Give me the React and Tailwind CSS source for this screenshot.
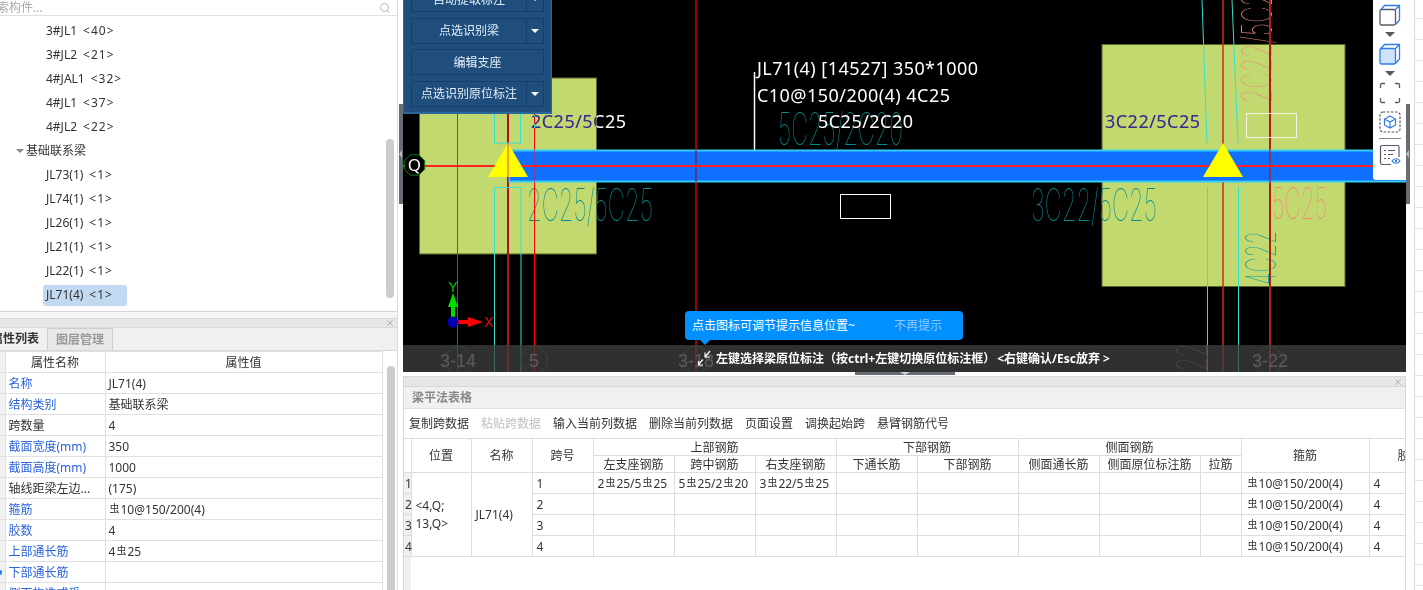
import React from 'react';
import { Search, X } from 'lucide-react';

const treeItems = [
  ['3#JL1', '<40>'],
  ['3#JL2', '<21>'],
  ['4#JAL1', '<32>'],
  ['4#JL1', '<37>'],
  ['4#JL2', '<22>'],
  ['group', '基础联系梁'],
  ['JL73(1)', '<1>'],
  ['JL74(1)', '<1>'],
  ['JL26(1)', '<1>'],
  ['JL21(1)', '<1>'],
  ['JL22(1)', '<1>'],
  ['JL71(4)', '<1>'],
];

// rebar grade mark, sits a little above the digits
const Bar = () => <span className="mx-px text-[10px] align-[2px]">虫</span>;

const propRows = [
  { name: '名称', value: 'JL71(4)', blue: true },
  { name: '结构类别', value: '基础联系梁', blue: true },
  { name: '跨数量', value: '4' },
  { name: '截面宽度(mm)', value: '350', blue: true },
  { name: '截面高度(mm)', value: '1000', blue: true },
  { name: '轴线距梁左边...', value: '(175)' },
  { name: '箍筋', value: <><Bar />10@150/200(4)</>, blue: true },
  { name: '胶数', value: '4', blue: true },
  { name: '上部通长筋', value: <>4<Bar />25</>, blue: true },
  { name: '下部通长筋', value: '', blue: true, dot: true },
  { name: '侧面构造或受', value: '', blue: true },
];

const LeftPanel = () => (
  <div className="flex h-full w-[398px] shrink-0 flex-col overflow-hidden border-r border-[#dcdcdc]">
    <div className="relative h-[312px] shrink-0 border-b border-[#d4d4d4] bg-white">
      <div className="flex h-[16px] items-center justify-between border-b border-[#e0e0e0] pr-[6px]">
        <span className="-ml-[15px] text-xs text-[#aaaaaa]">搜索构件...</span>
        <Search size={12} className="text-[#b8b8b8]" />
      </div>
      <div className="pt-[3px]">
        {treeItems.map(([label, count]) =>
          label === 'group' ? (
            <div key={count} className="flex h-[24px] items-center pl-[16px] text-xs text-[#333]">
              <span className="mr-[2px] h-0 w-0 border-x-[4px] border-t-[4px] border-x-transparent border-t-[#888]"></span>
              {count}
            </div>
          ) : (
            <div key={label} className="flex h-[24px] items-center pl-[43px] text-xs text-[#333]">
              <span className={`flex h-[21px] items-center rounded-[3px] px-[3px] ${label === 'JL71(4)' ? 'w-[84px] bg-[#c1d9f1]' : ''}`}>
                {label}
                <span className="ml-[6px] tracking-[1px]">{count}</span>
              </span>
            </div>
          )
        )}
      </div>
      <div className="absolute right-[3px] top-[139px] h-[159px] w-[8px] rounded bg-[#cccccc]"></div>
    </div>
    <div className="h-[6px] shrink-0 bg-[#f5f5f5]"></div>
    <div className="flex h-[10px] shrink-0 items-center justify-end border-y border-[#d8d8d8] bg-[#e6e6e6] pr-[2px]">
      <X size={10} className="text-[#aaa]" />
    </div>
    <div className="flex h-[23px] shrink-0 border-b border-[#d8d8d8] bg-[#f0f0f0] text-xs font-bold">
      <div className="flex w-[47px] items-center overflow-hidden">
        <span className="-ml-[9px] shrink-0 text-[#333]">属性列表</span>
      </div>
      <div className="flex w-[66px] items-center justify-center border-x border-t border-[#cccccc] bg-[#e8e8e8] text-[#999]">图层管理</div>
    </div>
    <div className="relative flex min-h-0 flex-1">
      <table className="h-fit w-[382px] table-fixed border-collapse text-xs text-[#333]">
        <colgroup>
          <col style={{ width: '5px' }} />
          <col style={{ width: '100px' }} />
          <col style={{ width: '277px' }} />
        </colgroup>
        <thead>
          <tr className="h-[21px]">
            <th className="border border-l-0 border-[#e0e0e0] bg-[#f0f0f0]"></th>
            <th className="border border-[#e0e0e0] pt-[2px] font-normal">属性名称</th>
            <th className="border border-[#e0e0e0] pt-[2px] font-normal">属性值</th>
          </tr>
        </thead>
        <tbody>
          {propRows.map((row) => (
            <tr key={row.name} className="h-[21px]">
              <td className="border border-l-0 border-[#e0e0e0] bg-[#f0f0f0] p-0">
                {row.dot && <div className="h-[5px] w-[2px] rounded-r bg-[#2f7de1]"></div>}
              </td>
              <td className={`truncate border border-[#e0e0e0] px-[3px] pb-0 pt-px ${row.blue ? 'text-[#2b63dc]' : ''}`}>{row.name}</td>
              <td className="border border-[#e0e0e0] px-[3px] pb-0 pt-px">{row.value}</td>
            </tr>
          ))}
        </tbody>
      </table>
      <div className="absolute right-[2px] top-[15px] h-[300px] w-[8px] rounded bg-[#cccccc]"></div>
    </div>
  </div>
);

const Splitter = ({ width }) => (
  <div className={`flex h-full shrink-0 justify-end bg-white ${width}`}>
    <div className="relative mt-[104px] flex h-[100px] w-[4px] items-center bg-[#666d75]">
      <span className="h-0 w-0 border-y-[4px] border-r-[3px] border-y-transparent border-r-[#b8bcc0]"></span>
    </div>
  </div>
);

const CadText = ({ x, y, w, h, fill, rotate, children }) => (
  <text
    x={x}
    y={y}
    textLength={w}
    lengthAdjust="spacingAndGlyphs"
    fontSize={h / 0.72}
    fontFamily="Inter, sans-serif"
    fontWeight="100"
    fill={fill}
    transform={rotate ? `rotate(-90 ${x} ${y})` : undefined}
  >
    {children}
  </text>
);

const hexPoints = (cx, cy, r) =>
  Array.from({ length: 8 }, (_, i) => {
    const a = (Math.PI / 4) * i + Math.PI / 8;
    return `${(cx + r * Math.cos(a)).toFixed(1)},${(cy + r * Math.sin(a)).toFixed(1)}`;
  }).join(' ');

const Drawing = () => (
  <svg className="absolute left-0 top-0 h-[372px] w-[1003px]" viewBox="403 0 1003 372">
    <rect x="419.5" y="78" width="177" height="176" fill="#c1d96f" stroke="#59662f" />
    <rect x="1102" y="44.5" width="243" height="242" fill="#c1d96f" stroke="#59662f" />

    <g fontFamily="Inter, sans-serif">
      <CadText x={778} y={145} w={125} h={32} fill="#0a8a8a">5C25/2C20</CadText>
      <CadText x={527} y={221} w={126} h={32} fill="#0a8a8a">2C25/5C25</CadText>
      <CadText x={1031} y={221} w={126} h={32} fill="#0a8a8a">3C22/5C25</CadText>
      <CadText x={1272} y={219} w={55} h={31} fill="#f08a80">5C25</CadText>
      <CadText x={1276} y={285} w={54} h={30} fill="#0f9c9c" rotate>4C22</CadText>
      <CadText x={1272} y={103} w={124} h={30} fill="#ee8a80" rotate>2C22/5C25</CadText>
      <CadText x={1207} y={371} w={28} h={30} fill="#9a5a5a" rotate>22</CadText>
    </g>

    <g fill="none" strokeWidth="1">
      <line x1="457.5" y1="0" x2="457.5" y2="372" stroke="#ff1a00" />
      <line x1="534.5" y1="0" x2="534.5" y2="372" stroke="#ff0000" />
      <line x1="508" y1="0" x2="508" y2="372" stroke="#b0121a" strokeWidth="2" />
      <line x1="696" y1="0" x2="696" y2="372" stroke="#96000a" strokeWidth="2" />
      <line x1="1223" y1="0" x2="1223" y2="372" stroke="#d02a10" strokeWidth="1.5" />
      <line x1="1270" y1="0" x2="1270" y2="372" stroke="#b0201a" strokeWidth="2" />
      <rect x="494.5" y="100" width="26" height="43" stroke="#35e0d0" />
      <path d="M494.5 372V187.5H521V372" stroke="#35e0d0" />
      <line x1="1202" y1="0" x2="1207" y2="143" stroke="#35e0d0" />
      <line x1="1232" y1="0" x2="1238" y2="143" stroke="#35e0d0" />
      <line x1="1207.5" y1="187" x2="1207.5" y2="372" stroke="#35e0d0" />
      <line x1="1238.5" y1="187" x2="1238.5" y2="372" stroke="#35e0d0" />
      <rect x="840.5" y="194.5" width="50" height="24" stroke="#ffffff" />
      <rect x="1246.5" y="113.5" width="50" height="24" stroke="#f4f4e4" />
      <line x1="754.5" y1="72" x2="754.5" y2="150" stroke="#ffffff" strokeWidth="1.5" />
    </g>

    <rect x="509" y="150.5" width="900" height="31" fill="#0f6fff" stroke="#35cdf5" strokeWidth="2" />
    <line x1="508" y1="150" x2="508" y2="182" stroke="#b0121a" strokeWidth="2" opacity="0.6" />
    <line x1="534.5" y1="150" x2="534.5" y2="182" stroke="#e0102a" opacity="0.5" />
    <line x1="696" y1="150" x2="696" y2="182" stroke="#96000a" strokeWidth="2" opacity="0.5" />
    <line x1="1270" y1="150" x2="1270" y2="182" stroke="#b0201a" strokeWidth="2" opacity="0.7" />
    <rect x="403" y="165" width="1003" height="2" fill="#ff2020" />
    <polygon points="508,143 528,177 488,177" fill="#ffff00" />
    <polygon points="1223,143 1243,177 1203,177" fill="#ffff00" />
    <line x1="508" y1="143" x2="508" y2="177" stroke="#f0803c" strokeWidth="1.5" />

    <polygon points={hexPoints(414.5, 165, 11)} fill="#000" stroke="#0a7a0a" />
    <text x="414.5" y="171" textAnchor="middle" fontSize="17" fill="#fff" fontFamily="Noto Sans, sans-serif">Q</text>

    <g fontFamily="Noto Sans, sans-serif" fontSize="18" fill="#ffffff">
      <text x="757" y="75" textLength="221">JL71(4) [14527] 350*1000</text>
      <text x="757" y="102" textLength="193">C10@150/200(4) 4C25</text>
      <text x="818" y="128" textLength="95">5C25/2C20</text>
    </g>
    <g className="mix-blend-difference" fontFamily="Noto Sans, sans-serif" fontSize="18" fill="#ffffff">
      <text x="531" y="128" textLength="95">2C25/5C25</text>
      <text x="1105" y="128" textLength="95">3C22/5C25</text>
    </g>

    {/* axis mark */}
    <line x1="453" y1="322" x2="453" y2="306" stroke="#00e000" strokeWidth="4" />
    <polygon points="453,293 458,307 448,307" fill="#00e000" />
    <text x="453" y="292" textAnchor="middle" fontSize="14" fill="#00d000" fontFamily="Liberation Sans, sans-serif">Y</text>
    <line x1="453" y1="322" x2="470" y2="322" stroke="#ff0000" strokeWidth="4" />
    <polygon points="483,322 468,317 468,327" fill="#ff0000" />
    <text x="489" y="327" textAnchor="middle" fontSize="14" fill="#ff0000" fontFamily="Liberation Sans, sans-serif">X</text>
    <circle cx="453" cy="322" r="5.5" fill="#0000b4" />

    {/* axis labels under the prompt bar */}
    {[[458, '3-14'], [534, '5'], [696, '3-18'], [1270, '3-22']].map(([cx, label]) => (
      <g key={label}>
        <polygon points={hexPoints(cx, 360, 14)} fill="none" stroke="#0a6a0a" />
        <text x={cx} y="367" textAnchor="middle" fontSize="18" fill="#aaaaaa" fontFamily="Liberation Sans, sans-serif">{label}</text>
      </g>
    ))}
  </svg>
);

const MenuButton = ({ label, caret }) => (
  <div className="flex h-[26px] border border-[#173e66] bg-[#1f4e7d] text-xs text-[#e4eef8]">
    <div className="flex flex-1 items-center justify-center pt-px">{label}</div>
    {caret && (
      <div className="flex w-[17px] items-center justify-center border-l border-[#173e66]">
        <span className="h-0 w-0 border-x-[4px] border-t-[4px] border-x-transparent border-t-white"></span>
      </div>
    )}
  </div>
);

const RecognisePanel = () => (
  <div className="absolute left-0 top-0 h-[114px] w-[149px] overflow-hidden border-x border-b-2 border-[#2a679f] bg-[#1f4e7d] px-[7px]">
    <div className="-mt-[14px] flex flex-col gap-[5.5px]">
      <MenuButton label="自动提取标注" caret />
      <MenuButton label="点选识别梁" caret />
      <MenuButton label="编辑支座" />
      <MenuButton label="点选识别原位标注" caret />
    </div>
  </div>
);

const Caret = () => (
  <span className="mt-[6px] h-0 w-0 border-x-[5px] border-t-[5px] border-x-transparent border-t-[#555b66]"></span>
);

const ViewToolbar = () => (
  <div className="absolute right-0 top-0 flex h-[180px] w-[33px] flex-col items-center rounded-bl-[3px] bg-white pt-[4px]">
    <svg width="22" height="22" viewBox="0 0 22 22" fill="none" strokeWidth="1.3">
      <rect x="1" y="5.5" width="15.5" height="15.5" rx="1.5" stroke="#555b66" />
      <path d="M1.5 6L5.5 1.5H20.5V16L16.5 20.5M16.5 5.5L20.5 1.5" stroke="#2f7de1" />
    </svg>
    <Caret />
    <svg className="mt-[6px]" width="22" height="22" viewBox="0 0 22 22" fill="none" strokeWidth="1.3">
      <rect x="1" y="5.5" width="15.5" height="15.5" rx="1.5" fill="#cfe2fb" stroke="#2f7de1" />
      <path d="M1.5 6L5.5 1.5H20.5V16L16.5 20.5M16.5 5.5L20.5 1.5" stroke="#2f7de1" />
    </svg>
    <Caret />
    <svg className="mt-[6px]" width="22" height="22" viewBox="0 0 22 22" fill="none" stroke="#555b66" strokeWidth="1.3">
      <path d="M1.5 6V3A1.5 1.5 0 0 1 3 1.5H6M16 1.5H19A1.5 1.5 0 0 1 20.5 3V6M20.5 16V19A1.5 1.5 0 0 1 19 20.5H16M6 20.5H3A1.5 1.5 0 0 1 1.5 19V16" />
    </svg>
    <svg className="mt-[7px]" width="22" height="22" viewBox="0 0 22 22" fill="none" strokeWidth="1.2">
      <rect x="1" y="1" width="20" height="20" rx="3" stroke="#555b66" strokeDasharray="2.5 1.5" />
      <path d="M11 5L16.5 8V14L11 17L5.5 14V8ZM5.5 8L11 11L16.5 8M11 11V17" stroke="#2f7de1" />
    </svg>
    <div className="mt-[5px] h-px w-[22px] bg-[#888]"></div>
    <svg className="mt-[5px]" width="22" height="22" viewBox="0 0 22 22" fill="none" strokeWidth="1.2">
      <path d="M12 20.5H3A1.5 1.5 0 0 1 1.5 19V3A1.5 1.5 0 0 1 3 1.5H18.5A1.5 1.5 0 0 1 20 3V13" stroke="#555b66" />
      <path d="M5 6.5H7M9 6.5H16M5 10.5H7M9 10.5H14M5 14.5H7M9 14.5H11" stroke="#555b66" />
      <path d="M13 17C15 14 19 14 21 17C19 20 15 20 13 17Z" stroke="#2f7de1" />
      <circle cx="17" cy="17" r="1.2" fill="#2f7de1" />
    </svg>
  </div>
);

const Canvas = () => (
  <div className="relative h-[372px] shrink-0 overflow-hidden bg-black">
    <Drawing />
    <RecognisePanel />
    <ViewToolbar />
    <div className="absolute bottom-0 left-0 right-0 flex h-[27px] items-center bg-[#404040]/75 pl-[293px] text-xs font-bold text-white">
      <svg width="17" height="17" viewBox="0 0 17 17" fill="none" stroke="#fff" strokeWidth="1.2" className="mr-[3px]">
        <path d="M14 1L9 7M9 2.5V7H14M2 15L7 9.5M2.5 11V15H7" />
      </svg>
      左键选择梁原位标注（按ctrl+左键切换原位标注框）
      <span className="ml-[2px]">&lt;右键确认/Esc放弃</span>
      <span className="ml-[3px]">&gt;</span>
    </div>
    <div className="absolute left-[282px] top-[311px] flex h-[29px] w-[278px] items-center rounded bg-[#0090ff] pl-[7px] text-xs text-white">
      点击图标可调节提示信息位置~
      <span className="ml-[39px] text-[#8cc8ff]">不再提示</span>
      <span className="absolute left-[15px] top-[29px] h-0 w-0 border-x-[5px] border-t-[5px] border-x-transparent border-t-[#0090ff]"></span>
    </div>
  </div>
);

const actions = [
  { label: '复制跨数据' },
  { label: '粘贴跨数据', disabled: true },
  { label: '输入当前列数据' },
  { label: '删除当前列数据' },
  { label: '页面设置' },
  { label: '调换起始跨' },
  { label: '悬臂钢筋代号' },
];

const colWidths = [7, 60, 61, 61, 81, 81, 81, 81, 101, 81, 101, 41, 128, 36];
const cell = 'border border-[#dddddd] px-0 pb-0 pt-px font-normal';
const head = `${cell} leading-[14px]`;

const spanRows = [
  [<>2<Bar />25/5<Bar />25</>, <>5<Bar />25/2<Bar />20</>, <>3<Bar />22/5<Bar />25</>],
  ['', '', ''],
  ['', '', ''],
  ['', '', ''],
];

const SpanTable = () => (
  <div className="flex min-h-0 flex-1 flex-col overflow-hidden">
    <table className="w-[1001px] shrink-0 table-fixed border-collapse text-xs text-[#333]">
      <colgroup>
        {colWidths.map((w, i) => (
          <col key={i} style={{ width: `${w}px` }} />
        ))}
      </colgroup>
      <thead>
        <tr className="h-[17px]">
          <th rowSpan={2} className={`${head} border-l-0`}></th>
          <th rowSpan={2} className={head}>位置</th>
          <th rowSpan={2} className={head}>名称</th>
          <th rowSpan={2} className={head}>跨号</th>
          <th colSpan={3} className={head}>上部钢筋</th>
          <th colSpan={2} className={head}>下部钢筋</th>
          <th colSpan={3} className={head}>侧面钢筋</th>
          <th rowSpan={2} className={head}>箍筋</th>
          <th rowSpan={2} className={`${head} overflow-hidden border-r-0 text-left`}>
            <span className="ml-[28px] whitespace-nowrap">胶数</span>
          </th>
        </tr>
        <tr className="h-[17px]">
          {['左支座钢筋', '跨中钢筋', '右支座钢筋', '下通长筋', '下部钢筋', '侧面通长筋', '侧面原位标注筋', '拉筋'].map((h) => (
            <th key={h} className={head}>{h}</th>
          ))}
        </tr>
      </thead>
      <tbody>
        {spanRows.map((row, i) => (
          <tr key={i} className="h-[21px]">
            <td className={`${cell} border-l-0 bg-[#f0f0f0] pl-px`}>{i + 1}</td>
            {i === 0 && (
              <>
                <td rowSpan={4} className={`${cell} px-[4px] leading-[18px]`}>&lt;4,Q;<br />13,Q&gt;</td>
                <td rowSpan={4} className={`${cell} px-[4px]`}>JL71(4)</td>
              </>
            )}
            <td className={`${cell} px-[4px]`}>{i + 1}</td>
            {row.map((v, j) => (
              <td key={j} className={`${cell} px-[4px] whitespace-nowrap`}>{v}</td>
            ))}
            {['', '', '', '', ''].map((_, j) => (
              <td key={j} className={cell}></td>
            ))}
            <td className={`${cell} px-[5px] whitespace-nowrap`}><Bar />10@150/200(4)</td>
            <td className={`${cell} border-r-0 px-[4px]`}>4</td>
          </tr>
        ))}
      </tbody>
    </table>
    <div className="w-[7px] flex-1 bg-[#f0f0f0]"></div>
  </div>
);

const BottomPanel = () => (
  <div className="flex min-h-0 flex-1 flex-col border-l border-r border-[#d8d8d8] bg-white">
    <div className="flex h-[11px] shrink-0 items-center justify-end border-y border-[#d8d8d8] bg-[#e6e6e6] pr-[2px]">
      <X size={10} className="text-[#aaa]" />
    </div>
    <div className="flex h-[22px] shrink-0 items-center border-b border-[#e0e0e0] bg-[#f0f0f0] pl-[8px] text-xs font-bold text-[#888]">梁平法表格</div>
    <div className="flex h-[29px] shrink-0 items-center gap-3 px-[5px] text-xs text-[#333]">
      {actions.map((a) => (
        <span key={a.label} className={a.disabled ? 'text-[#c0c0c0]' : ''}>{a.label}</span>
      ))}
    </div>
    <SpanTable />
  </div>
);

const RightEdge = () => (
  <div className="relative h-full w-[17px] shrink-0 bg-white">
    <Splitter width="w-[4px]" />
    <div className="absolute left-[8px] top-0 flex h-full w-[9px] flex-col border-l border-[#d8d8d8] pt-[18px]">
      {Array.from({ length: 28 }, (_, i) => (
        <div key={i} className="h-[21px] shrink-0 border-t border-[#e4e4e4]"></div>
      ))}
    </div>
  </div>
);

export default function App() {
  return (
    <div className="flex h-[590px] w-[1423px] overflow-hidden bg-white font-['Noto_Sans','Noto_Sans_CJK_SC',sans-serif]">
      <LeftPanel />
      <Splitter width="w-[5px]" />
      <div className="flex h-full w-[1003px] shrink-0 flex-col">
        <Canvas />
        <div className="flex h-[4px] shrink-0 justify-center bg-white">
          <div className="flex h-[3px] w-[100px] justify-center bg-[#666d75]">
            <span className="h-0 w-0 border-x-[5px] border-t-[3px] border-x-transparent border-t-[#d0d4d8]"></span>
          </div>
        </div>
        <BottomPanel />
      </div>
      <RightEdge />
    </div>
  );
}
